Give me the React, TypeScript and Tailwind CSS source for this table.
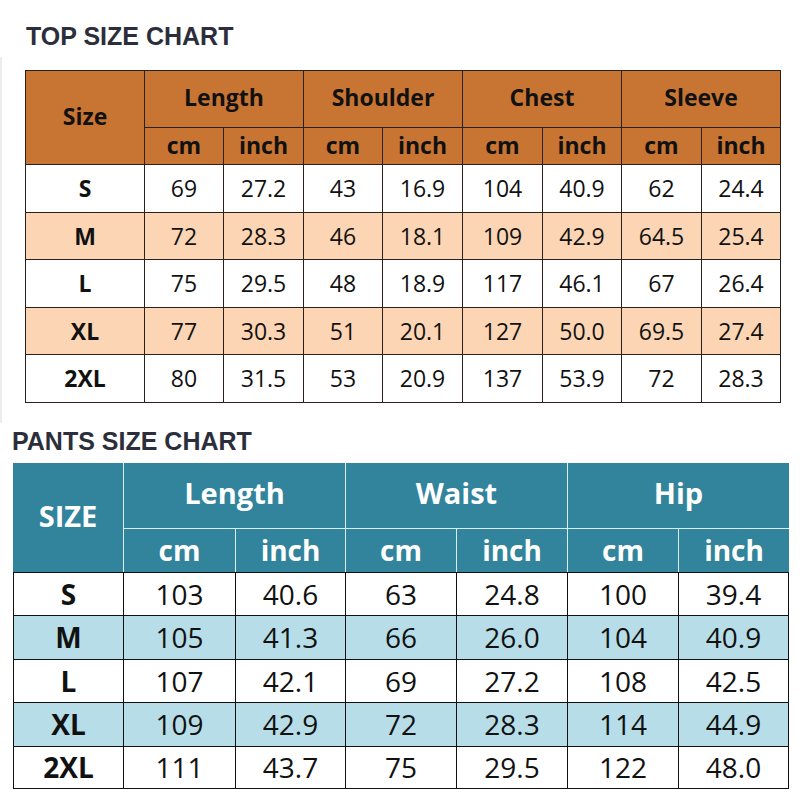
import React from 'react';

const topRows = [
  ['S', '69', '27.2', '43', '16.9', '104', '40.9', '62', '24.4'],
  ['M', '72', '28.3', '46', '18.1', '109', '42.9', '64.5', '25.4'],
  ['L', '75', '29.5', '48', '18.9', '117', '46.1', '67', '26.4'],
  ['XL', '77', '30.3', '51', '20.1', '127', '50.0', '69.5', '27.4'],
  ['2XL', '80', '31.5', '53', '20.9', '137', '53.9', '72', '28.3'],
];

const pantsRows = [
  ['S', '103', '40.6', '63', '24.8', '100', '39.4'],
  ['M', '105', '41.3', '66', '26.0', '104', '40.9'],
  ['L', '107', '42.1', '69', '27.2', '108', '42.5'],
  ['XL', '109', '42.9', '72', '28.3', '114', '44.9'],
  ['2XL', '111', '43.7', '75', '29.5', '122', '48.0'],
];

const cell = 'flex items-center justify-center';

export default function App() {
  return (
    <div className="w-[800px] h-[800px] bg-white overflow-hidden">
      {/* TOP */}
      <div className="h-[57px] pt-[21px] pl-[26px] font-['Liberation_Sans',Arial,sans-serif] font-bold text-[25px] leading-[30px] text-[#2c2f3b]">
        TOP SIZE CHART
      </div>
      <div className="h-[366px] border-l-2 border-[#ececec] pt-[13px] pl-[23px]">
        <div className="grid w-fit grid-cols-[118px_78px_79px_78px_79px_79px_78px_79px_78px] grid-rows-[56px_36px_47px_46px_47px_46px_47px] gap-px p-px bg-[#2a211c] font-['Open_Sans','Noto_Sans',sans-serif] text-[23px] text-[#111]">
          <div className={`${cell} row-span-2 bg-[#c87533] font-bold pb-[3px]`}>Size</div>
          {['Length', 'Shoulder', 'Chest', 'Sleeve'].map((h) => (
            <div key={h} className={`${cell} col-span-2 bg-[#c87533] font-bold pb-[4px]`}>{h}</div>
          ))}
          {[0, 1, 2, 3].map((i) => (
            <React.Fragment key={i}>
              <div className={`${cell} bg-[#c87533] font-bold pb-[2px]`}>cm</div>
              <div className={`${cell} bg-[#c87533] font-bold pb-[2px]`}>inch</div>
            </React.Fragment>
          ))}
          {topRows.map((r, ri) =>
            r.map((v, ci) => (
              <div
                key={`${ri}-${ci}`}
                className={`${cell} ${ri % 2 === 1 ? 'bg-[#fcd5b4]' : 'bg-white'} ${ci === 0 ? 'font-bold' : ''}`}
              >
                {v}
              </div>
            ))
          )}
        </div>
      </div>

      {/* PANTS */}
      <div className="h-[40px] pt-[3px] pl-[12px] font-['Liberation_Sans',Arial,sans-serif] font-bold text-[25px] leading-[30px] text-[#2c2f3b]">
        PANTS SIZE CHART
      </div>
      <div className="ml-[13px] w-fit font-['Open_Sans','Noto_Sans',sans-serif]">
        <div className="grid grid-cols-[110px_111px_109px_110px_110px_110px_110px] grid-rows-[65px_43px] gap-px bg-[#d9eef3] text-white font-bold">
          <div className={`${cell} row-span-2 bg-[#31849b] text-[29px] pb-[4px]`}>SIZE</div>
          {['Length', 'Waist', 'Hip'].map((h) => (
            <div key={h} className={`${cell} col-span-2 bg-[#31849b] text-[29px] pb-[6px]`}>{h}</div>
          ))}
          {[0, 1, 2].map((i) => (
            <React.Fragment key={i}>
              <div className={`${cell} bg-[#31849b] text-[28px] pb-[2px]`}>cm</div>
              <div className={`${cell} bg-[#31849b] text-[28px] pb-[2px]`}>inch</div>
            </React.Fragment>
          ))}
        </div>
        <div className="grid grid-cols-[109px_111px_109px_110px_110px_110px_109px] grid-rows-[42px_43px_42px_43px_41px] gap-px p-px bg-[#111] text-[28px] text-[#111]">
          {pantsRows.map((r, ri) =>
            r.map((v, ci) => (
              <div
                key={`${ri}-${ci}`}
                className={`${cell} pb-[1px] ${ri % 2 === 1 ? 'bg-[#b7dee8]' : 'bg-white'} ${ci === 0 ? 'font-bold' : ''}`}
              >
                {v}
              </div>
            ))
          )}
        </div>
      </div>
    </div>
  );
}
